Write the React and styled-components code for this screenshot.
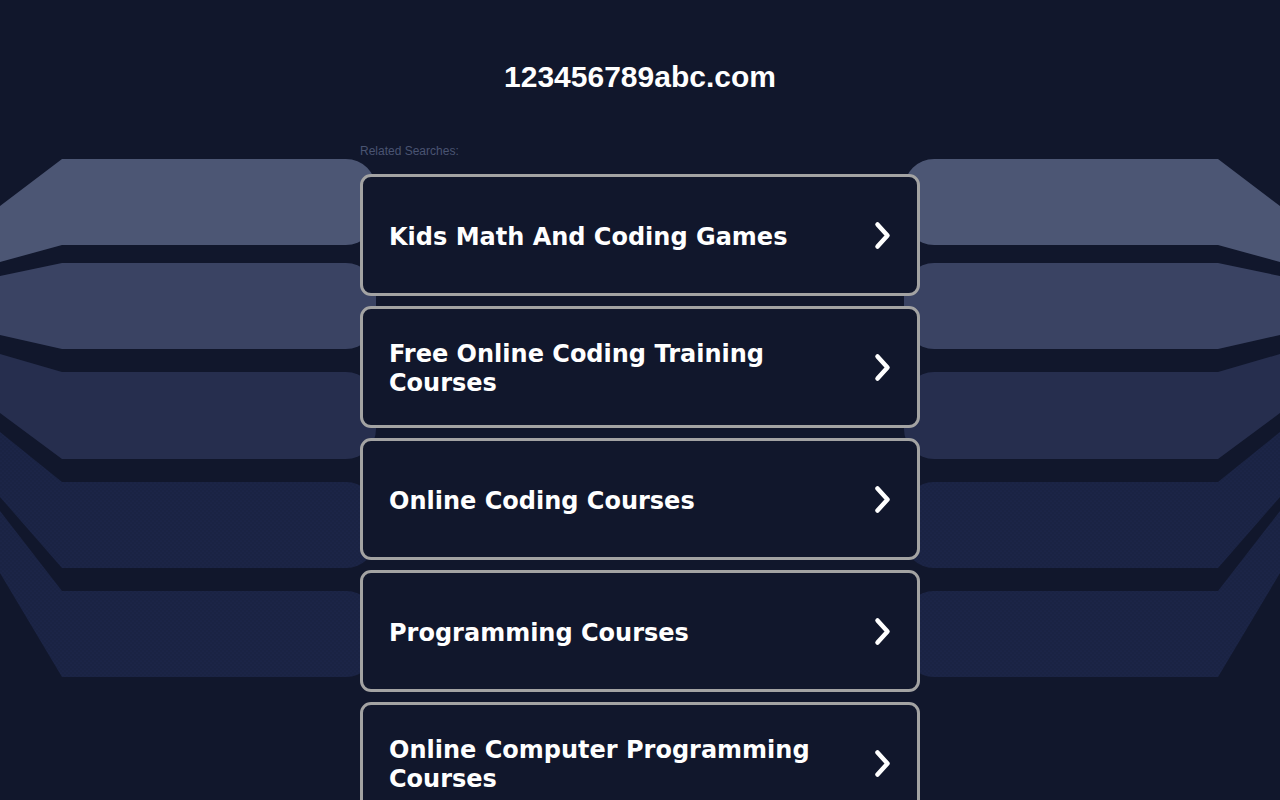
import styled, { createGlobalStyle } from 'styled-components';

const GlobalStyle = createGlobalStyle`
	html, body {
		margin: 0;
		padding: 0;
		background-color: #11172c;
	}
	body {
		font-family: "Liberation Sans", Arial, sans-serif;
	}
`

const Page = styled.div`
	position: relative;
	min-height: 800px;
	overflow: hidden;
`

const Backdrop = styled.svg`
	position: absolute;
	top: 0;
	left: 50%;
	margin-left: -640px;
	width: 1280px;
	height: 800px;
	z-index: 0;
	pointer-events: none;
`

const Content = styled.div`
	position: relative;
	z-index: 1;
	width: 560px;
	margin: 0 auto;
	padding-top: 60px;
`

const Domain = styled.h1`
	margin: 0;
	font-family: "Liberation Sans", Arial, sans-serif;
	font-weight: bold;
	font-size: 30px;
	line-height: 34px;
	color: #ffffff;
	text-align: center;
`

const Label = styled.div`
	margin-top: 50px;
	font-size: 12px;
	line-height: 14px;
	color: #4a5472;
`

const List = styled.div`
	display: flex;
	flex-direction: column;
	gap: 10px;
	margin-top: 16px;
`

const Card = styled.a`
	box-sizing: border-box;
	height: 122px;
	display: flex;
	align-items: center;
	justify-content: space-between;
	padding: 0 26px 0 26px;
	background-color: #11172c;
	border: 3px solid #a3a3a3;
	border-radius: 11px;
	text-decoration: none;
	cursor: pointer;
`

const Title = styled.span`
	max-width: 450px;
	padding-top: 4px;
	font-family: "DejaVu Sans", Verdana, sans-serif;
	font-weight: bold;
	font-size: 24px;
	line-height: 29px;
	color: #ffffff;
`

const Chevron = styled.svg`
	flex: none;
	width: 17px;
	height: 29px;
`

// band edges at the left side; the right side is the mirror
const bands = [
	{ fill: '#4c5674', a: 206, t: 159, b: 245, z: 262 },
	{ fill: '#3a4363', a: 276, t: 263, b: 349, z: 335 },
	{ fill: '#262e4e', a: 354, t: 372, b: 459, z: 413 },
	{ fill: 'url(#dots)', a: 432, t: 482, b: 568, z: 497 },
	{ fill: 'url(#dots)', a: 511, t: 591, b: 677, z: 573 },
];

const bandPath = ({ a, t, b, z }) => {
	const r = 30;
	return `M0 ${a} L62 ${t} H346 A${r} ${r} 0 0 1 376 ${t + r} V${b - r} A${r} ${r} 0 0 1 346 ${b} H62 L0 ${z} Z`;
}

const items = [
	'Kids Math And Coding Games',
	'Free Online Coding Training Courses',
	'Online Coding Courses',
	'Programming Courses',
	'Online Computer Programming Courses',
];

const App = () => {
	return (
		<>
			<GlobalStyle />
			<Page>
				<Backdrop viewBox="0 0 1280 800">
					<defs>
						<pattern id="dots" width="4" height="4" patternUnits="userSpaceOnUse">
							<rect width="4" height="4" fill="#1a2343" />
							<circle cx="1" cy="1" r="0.6" fill="#1f2850" />
							<circle cx="3" cy="3" r="0.6" fill="#1f2850" />
						</pattern>
					</defs>
					{bands.map((band, i) => (
						<g key={i} fill={band.fill}>
							<path d={bandPath(band)} />
							<path d={bandPath(band)} transform="translate(1280 0) scale(-1 1)" />
						</g>
					))}
				</Backdrop>
				<Content>
					<Domain>123456789abc.com</Domain>
					<Label>Related Searches:</Label>
					<List>
						{items.map((item) => (
							<Card key={item}>
								<Title>{item}</Title>
								<Chevron viewBox="0 0 17 29">
									<path
										d="M3.5 3.5 L13.5 14.5 L3.5 25.5"
										fill="none"
										stroke="#ffffff"
										strokeWidth="4.5"
										strokeLinecap="round"
										strokeLinejoin="round"
									/>
								</Chevron>
							</Card>
						))}
					</List>
				</Content>
			</Page>
		</>
	)
}

export default App;
